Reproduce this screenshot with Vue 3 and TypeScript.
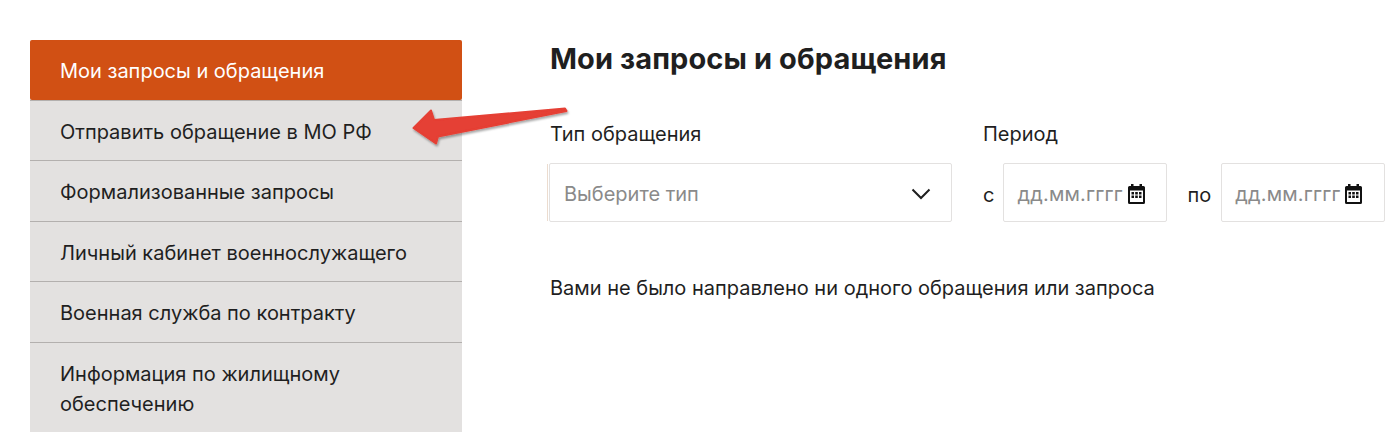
<script setup lang="ts">
interface MenuItem {
  title: string
  active?: boolean
}

const menu: MenuItem[] = [
  { title: 'Мои запросы и обращения', active: true },
  { title: 'Отправить обращение в МО РФ' },
  { title: 'Формализованные запросы' },
  { title: 'Личный кабинет военнослужащего' },
  { title: 'Военная служба по контракту' },
  { title: 'Информация по жилищному обеспечению' }
]

const dates = ['с', 'по']
</script>

<template>
  <div class="page">
    <nav class="side-menu">
      <a v-for="item in menu" :key="item.title" class="menu-item" :class="{ active: item.active }">
        {{ item.title }}
      </a>
    </nav>

    <main class="content">
      <h1>Мои запросы и обращения</h1>
      <div class="filters">
        <div class="filter-type">
          <div class="filter-label">Тип обращения</div>
          <div class="select">
            <span class="placeholder">Выберите тип</span>
            <svg class="chevron" width="20" height="12" viewBox="0 0 20 12">
              <path d="M1.500 1.500 10 10l8.500-8.500" fill="none" stroke="#1f1f1f" stroke-width="2" />
            </svg>
          </div>
        </div>
        <div class="filter-period">
          <div class="filter-label">Период</div>
          <div class="period-row">
            <template v-for="prefix in dates" :key="prefix">
              <span class="prefix">{{ prefix }}</span>
              <div class="date-input">
                <span class="placeholder date-text">дд.мм.гггг</span>
                <svg width="17" height="20" viewBox="0 0 17 20">
                  <path fill="#111" d="M3 0h2.500v2h6V0H14v2h1.500A1.500 1.500 0 0 1 17 3.500v15a1.500 1.500 0 0 1-1.500 1.500h-14A1.500 1.500 0 0 1 0 18.500v-15A1.500 1.500 0 0 1 1.500 2H3z" />
                  <rect x="2" y="6.500" width="13" height="11.500" fill="#fff" />
                  <path fill="#111" d="M3.500 8h2.500v2.500H3.500zM7.200 8h2.600v2.500H7.200zM11 8h2.500v2.500H11zM3.500 11.500H6V14H3.500zM7.200 11.500h2.600V14H7.200zM11 11.500h2.500V14H11z" />
                </svg>
              </div>
            </template>
          </div>
        </div>
      </div>
      <p class="empty">Вами не было направлено ни одного обращения или запроса</p>
    </main>

    <svg class="arrow" width="170" height="50" viewBox="0 0 170 50">
      <defs>
        <filter id="arrow-shadow" x="-10%" y="-20%" width="120%" height="150%">
          <feDropShadow dx="1" dy="2" stdDeviation="1" flood-color="#000" flood-opacity="0.35" />
        </filter>
      </defs>
      <path
        d="M3.500 29 21 11.500 24 21 155 9.500 156.500 12 28 37.500 26 44.500z"
        fill="#e53f34"
        stroke="#e53f34"
        stroke-width="2"
        stroke-linejoin="round"
        filter="url(#arrow-shadow)"
      />
    </svg>
  </div>
</template>

<style scoped>
.page {
  position: relative;
  display: flex;
  align-items: flex-start;
  height: 445px;
  padding: 40px 0 0 30px;
  box-sizing: border-box;
  overflow: hidden;
  font-family: Inter, "Noto Sans", sans-serif;
  font-size: 20px;
  color: #1f1f1f;
}

.side-menu {
  flex: 0 0 432px;
  display: flex;
  flex-direction: column;
  background: #e3e1e0;
  border-radius: 2px 2px 0 0;
}

.menu-item {
  display: block;
  padding: 16px 30px 13.500px;
  line-height: 30px;
  border-top: 1px solid #b3b0ae;
}

.menu-item.active {
  background: #d15014;
  color: #fff;
  border-top: 0;
  border-radius: 2px;
}

.content {
  margin-left: 88px;
  flex: 1;
}

h1 {
  margin: 0;
  font-size: 29px;
  line-height: 38px;
  font-weight: 700;
  letter-spacing: 0.1px;
}

.filters {
  display: flex;
  gap: 31px;
  margin-top: 41px;
}

.filter-label {
  line-height: 30px;
  margin-bottom: 14px;
}

.select {
  position: relative;
  width: 403px;
  height: 59px;
  box-sizing: border-box;
  display: flex;
  align-items: center;
  justify-content: space-between;
  padding: 3px 20px 0 14px;
  border: 1px solid #e3e1e0;
  border-radius: 2px;
  margin-left: -1px;
}

.select::before {
  content: "";
  position: absolute;
  left: -3px;
  top: 0;
  bottom: 0;
  width: 1px;
  background: #ecdccf;
}

.placeholder {
  color: #8a8a8a;
}

.date-text {
  letter-spacing: 0.2px;
}

.period-row {
  display: flex;
  align-items: center;
}

.prefix {
  margin-right: 9px;
  padding-top: 4px;
}

.prefix:not(:first-child) {
  margin-right: 10px;
}

.date-input {
  width: 164px;
  height: 59px;
  box-sizing: border-box;
  display: flex;
  align-items: center;
  padding: 3px 0 0 13px;
  gap: 5px;
  border: 1px solid #e3e1e0;
  border-radius: 2px;
  margin-right: 20px;
}

.date-input:last-child {
  margin-right: 0;
}

.empty {
  margin: 51px 0 0;
  line-height: 30px;
}

.arrow {
  position: absolute;
  left: 410px;
  top: 99px;
}
</style>

<style>
body {
  margin: 0;
  background: #fff;
}
</style>
